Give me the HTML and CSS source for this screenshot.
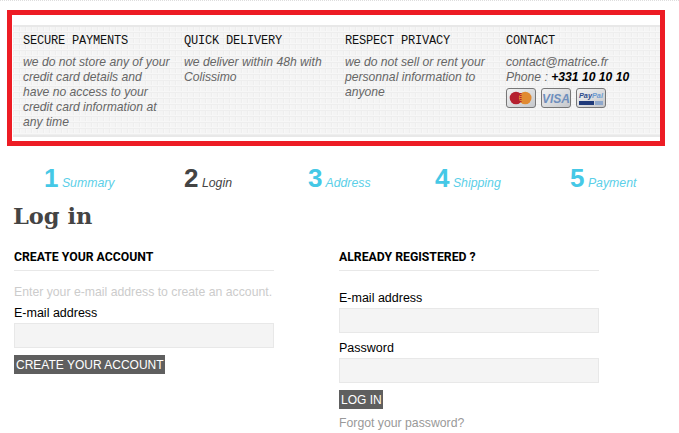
FILE: index.html
```html
<!DOCTYPE html>
<html lang="en">
<head>
    <meta charset="UTF-8">
    <meta name="viewport" content="width=device-width, initial-scale=1.0">
    <title>Log in</title>
    <link rel="stylesheet" href="styles.css">
</head>
<body>
    <div class="highlight">
        <div class="reassure">
            <div class="reassure-col">
                <h4>SECURE PAYMENTS</h4>
                <p>we do not store any of your credit card details and have no access to your credit card information at any time</p>
            </div>
            <div class="reassure-col">
                <h4>QUICK DELIVERY</h4>
                <p>we deliver within 48h with Colissimo</p>
            </div>
            <div class="reassure-col">
                <h4>RESPECT PRIVACY</h4>
                <p>we do not sell or rent your personnal information to anyone</p>
            </div>
            <div class="reassure-col">
                <h4>CONTACT</h4>
                <p>contact@matrice.fr<br>Phone : <strong>+331 10 10 10</strong></p>
                <div class="cards">
                    <svg class="card" viewBox="0 0 30 20">
                        <defs>
                            <linearGradient id="cardFill" x1="0" y1="0" x2="1" y2="1">
                                <stop offset="0" stop-color="#f4f4f4"/>
                                <stop offset="1" stop-color="#c4c6ca"/>
                            </linearGradient>
                        </defs>
                        <rect x="0.5" y="0.5" width="29" height="19" rx="2.5" fill="url(#cardFill)" class="card-bg"/>
                        <circle cx="10" cy="10" r="6.3" fill="#b5202f"/>
                        <circle cx="19.2" cy="10" r="6.3" fill="#e08a32"/>
                        <path d="M14.6 5v10" stroke="#b5202f" stroke-width="2" stroke-dasharray="1 1"/>
                    </svg>
                    <svg class="card" viewBox="0 0 30 20">
                        <rect x="0.5" y="0.5" width="29" height="19" rx="2.5" fill="url(#cardFill)" class="card-bg"/>
                        <text x="15" y="14.5" text-anchor="middle" class="visa">VISA</text>
                    </svg>
                    <svg class="card" viewBox="0 0 30 20">
                        <rect x="0.5" y="0.5" width="29" height="19" rx="2.5" fill="url(#cardFill)" class="card-bg"/>
                        <text x="3" y="10" class="paypal"><tspan fill="#2b4a8c">Pay</tspan><tspan fill="#6d9bd1">Pal</tspan></text>
                        <rect x="3" y="13" width="15" height="4" fill="#1f3a7a"/>
                        <rect x="19" y="13" width="8" height="4" fill="#8fa8cc"/>
                    </svg>
                </div>
            </div>
        </div>
    </div>

    <ul class="steps">
        <li><b>1</b> <span>Summary</span></li>
        <li class="current"><b>2</b> <span>Login</span></li>
        <li><b>3</b> <span>Address</span></li>
        <li><b>4</b> <span>Shipping</span></li>
        <li><b>5</b> <span>Payment</span></li>
    </ul>

    <h1>Log in</h1>

    <div class="forms">
        <form class="account-form">
            <h3>CREATE YOUR ACCOUNT</h3>
            <p class="hint">Enter your e-mail address to create an account.</p>
            <label for="newEmail">E-mail address</label>
            <input type="text" id="newEmail">
            <button type="button">CREATE YOUR ACCOUNT</button>
        </form>
        <form class="account-form">
            <h3>ALREADY REGISTERED ?</h3>
            <label class="first-label" for="email">E-mail address</label>
            <input type="text" id="email">
            <label for="password">Password</label>
            <input type="password" id="password">
            <button type="button">LOG IN</button>
            <a class="forgot" href="#">Forgot your password?</a>
        </form>
    </div>
</body>
</html>
```

FILE: styles.css
```css
html, body {
    height: 100%;
}

body {
    margin: 0;
    border-top: 1px dotted #ddd;
    box-sizing: border-box;
    overflow: hidden;
    background-color: #fff;
    font-family: "Liberation Sans", Arial, sans-serif;
    font-size: 12px;
    color: #000;
}

.highlight {
    margin: 9px 14px 0 7px;
    height: 136px;
    padding: 10px 0 4px 1px;
    box-sizing: border-box;
    border: 5px solid #ed1c24;
}

.reassure {
    display: grid;
    grid-template-columns: repeat(4, 161px);
    height: 100%;
    padding: 7px 0 0 10px;
    box-sizing: border-box;
    border-top: 2px solid #e8e8e8;
    border-bottom: 2px solid #e8e8e8;
    background-color: #f4f4f4;
    background-image:
        repeating-linear-gradient(0deg, #eeeeee 0, #eeeeee 1px, #f7f7f7 1px, #f7f7f7 2px, transparent 2px, transparent 6px),
        repeating-linear-gradient(90deg, #eeeeee 0, #eeeeee 1px, #f7f7f7 1px, #f7f7f7 2px, transparent 2px, transparent 6px);
}

.reassure-col h4 {
    margin: 0 0 7px 0;
    font-family: "Liberation Mono", "Courier New", monospace;
    font-size: 12px;
    font-weight: normal;
    letter-spacing: -0.2px;
    line-height: 14px;
    color: #111;
}

.reassure-col p {
    margin: 0;
    width: 148px;
    font-size: 12.15px;
    font-style: italic;
    line-height: 15px;
    color: #666;
}

.reassure-col strong {
    color: #000;
}

.cards {
    display: flex;
    gap: 5px;
    margin-top: 3px;
}

.card {
    width: 30px;
    height: 20px;
}

.card-bg {
    stroke: #777;
}

.visa {
    font-family: "Liberation Sans", Arial, sans-serif;
    font-size: 12px;
    font-style: italic;
    font-weight: bold;
    fill: #6f8fbd;
}

.paypal {
    font-family: "Liberation Sans", Arial, sans-serif;
    font-size: 7.3px;
    font-style: italic;
    font-weight: bold;
}

.steps {
    display: grid;
    grid-template-columns: 140px 124px 127px 135px auto;
    margin: 16px 0 0 0;
    padding: 0 0 0 44px;
    list-style: none;
    font-size: 12.3px;
    font-style: italic;
    color: #5bcfe8;
}

.steps li {
    line-height: 32px;
}

.steps b {
    font-size: 26px;
    font-style: normal;
    color: #45c8e6;
}

.steps .current,
.steps .current b {
    color: #444;
}

h1 {
    margin: 1px 0 0 13px;
    font-family: "DejaVu Serif", serif;
    font-size: 22.5px;
    line-height: 32px;
    color: #444;
}

.forms {
    display: grid;
    grid-template-columns: 260px 260px;
    gap: 65px;
    margin: 17px 0 0 14px;
}

.account-form h3 {
    margin: 0;
    padding-bottom: 5px;
    border-bottom: 1px solid #e8e8e8;
    font-family: Roboto, sans-serif;
    font-size: 12.25px;
    line-height: 16px;
    color: #000;
}

.hint {
    margin: 14px 0 6px 0;
    font-size: 12.25px;
    line-height: 15px;
    color: #ccc;
}

label {
    display: block;
    margin: 0 0 2px 0;
    font-size: 12.5px;
    line-height: 15px;
}

input + label {
    margin-top: 8px;
}

.first-label {
    margin-top: 20px;
}

input {
    display: block;
    width: 100%;
    height: 25px;
    margin-bottom: 7px;
    box-sizing: border-box;
    border: 1px solid #e8e8e8;
    background-color: #f4f4f4;
}

button {
    display: block;
    height: 19px;
    padding: 0 1px 0 2px;
    border: none;
    background-color: #5f5f5f;
    font-family: "Liberation Sans", Arial, sans-serif;
    font-size: 12px;
    color: #fff;
}

.forgot {
    display: block;
    margin-top: 7px;
    font-size: 12.25px;
    line-height: 15px;
    color: #999;
    text-decoration: none;
}
```
